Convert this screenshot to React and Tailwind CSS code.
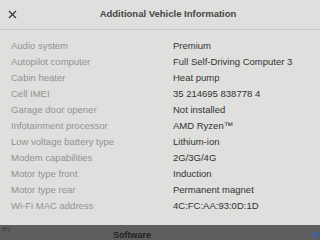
import React from "react";

const rows = [
  ["Audio system", "Premium"],
  ["Autopilot computer", "Full Self-Driving Computer 3"],
  ["Cabin heater", "Heat pump"],
  ["Cell IMEI", "35 214695 838778 4"],
  ["Garage door opener", "Not installed"],
  ["Infotainment processor", "AMD Ryzen™"],
  ["Low voltage battery type", "Lithium-ion"],
  ["Modem capabilities", "2G/3G/4G"],
  ["Motor type front", "Induction"],
  ["Motor type rear", "Permanent magnet"],
  ["Wi-Fi MAC address", "4C:FC:AA:93:0D:1D"],
];

export default function App() {
  return (
    <div className="w-[320px] h-[240px] overflow-hidden flex flex-col bg-[#5e5e5e] font-['Liberation_Sans',Arial,sans-serif]">
      {/* Dialog */}
      <div className="h-[225px] bg-[#dfdfdd] flex flex-col">
        <div className="h-[30px] flex items-center border-b border-[#c9c9c7] relative">
          <svg className="absolute left-[8px] top-[10px]" width="9" height="9" viewBox="0 0 9 9">
            <path d="M1 1 L8 8 M8 1 L1 8" stroke="#3a3a3a" strokeWidth="1.3" />
          </svg>
          <div className="w-full text-center text-[9.5px] font-bold text-[#454545] pl-[16px]">
            Additional Vehicle Information
          </div>
        </div>
        <div className="pt-[8px] flex flex-col">
          {rows.map(([label, value]) => (
            <div key={label} className="h-[16px] flex items-center text-[9.5px]">
              <div className="w-[173px] pl-[11px] text-[#929292]">{label}</div>
              <div className="text-[#333333]">{value}</div>
            </div>
          ))}
        </div>
      </div>
      {/* Bottom tabs peeking out */}
      <div className="flex-1 relative">
        <span className="absolute left-[2px] top-[0px] text-[8px] leading-none text-[#3f3f3f]">ey</span>
        <span className="absolute left-[113px] top-[6px] text-[9px] leading-none font-bold text-[#222222]">Software</span>
        <span className="absolute left-[313px] top-[6px] text-[9px] leading-none font-bold text-[#3a5fb5]">R</span>
      </div>
    </div>
  );
}
